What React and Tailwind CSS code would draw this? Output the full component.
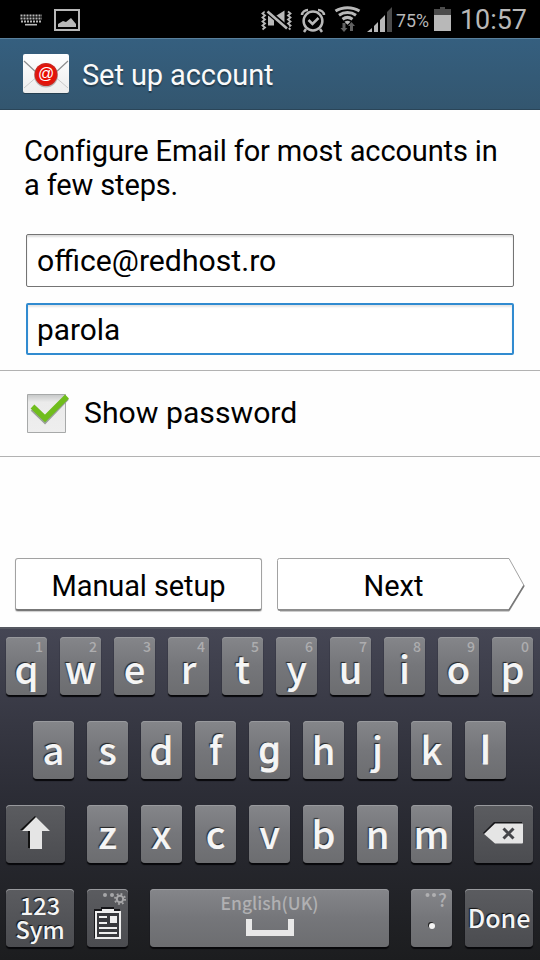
import React from 'react';

const LIGHT = 'bg-linear-to-b from-[#85868a] via-[#75767a] to-[#6c6d70]';
const DARK = 'bg-linear-to-b from-[#5b5c60] via-[#535458] to-[#4b4c50]';

const PLAIN = {
  g: "mt-[14px] text-[36px] font-['Noto_Sans',sans-serif] [-webkit-text-stroke:0.9px_#f5f5f5]",
  l: "mt-[13px] text-[38px] font-['Noto_Sans',sans-serif] [-webkit-text-stroke:0.9px_#f5f5f5]",
};

function Key({ label, hint, className = 'w-[41px]', tone = LIGHT, children }) {
  const face = PLAIN[label] || `text-[38px] [-webkit-text-stroke:0.2px_#f5f5f5] ${hint ? 'mt-[16px]' : 'mt-[13px]'}`;
  return (
    <div
      className={`relative flex h-[58px] shrink-0 justify-center rounded-[4px] text-[#f5f5f5] shadow-[0_2px_1px_#07070a,inset_0_1px_0_#98999d] ${label ? 'items-start' : 'items-center'} ${tone} ${className}`}
    >
      {hint && (
        <span className="absolute top-[4px] right-[4px] text-[14px] leading-[11px] font-medium text-[#adadaf]">{hint}</span>
      )}
      {label && (
        <span className={`leading-[30px] font-medium [text-shadow:-1px_-1px_1px_#222] ${face}`}>{label}</span>
      )}
      {children}
    </div>
  );
}

function StatusBar() {
  return (
    <header className="flex h-[38px] bg-black text-[#b8b8b8]">
      <svg width="540" height="38" viewBox="0 0 540 38" fill="none">
        <g stroke="#b8b8b8">
          <path d="M20.5 15.5H42M20.5 18.5H42M21 21.5H42" strokeWidth="2" strokeDasharray="2 1" />
          <path d="M25 24.7h12" strokeWidth="1.6" />
          <path d="M55 10h24v20H55z" strokeWidth="2" />
        </g>
        <path d="M58 27v-3l5-3 3 1 5-4 5 6v3z" fill="#b8b8b8" />
        <path d="M265 11.500l-2.500 2 2.500 2-2.500 2 2.500 2-2.500 2 2.500 2-2.500 2 2.500 2-2.500 2M288 11.500l2.500 2-2.500 2 2.500 2-2.500 2 2.500 2-2.500 2 2.500 2-2.500 2 2.500 2" stroke="#b8b8b8" strokeWidth="1.800" />
        <path d="M268 15.500h6v10h-6zM275 16.500l9.500-6v15z" fill="#b8b8b8" />
        <path d="M266 10l22 19" stroke="#000" strokeWidth="5.500" />
        <path d="M267.500 11.500l19.500 17" stroke="#b8b8b8" strokeWidth="2.600" />
        <g stroke="#b8b8b8" strokeWidth="2.5">
          <circle cx="313" cy="21" r="9.4" />
          <path d="M308.5 20l4 4 6-6M302 15c0-3 3-5 6-5M324 15c0-3-3-5-6-5M306 29l-2 3M320 29l2 3" />
        </g>
        <g stroke="#b8b8b8" strokeWidth="3">
          <path d="M335.5 11c7-4.500 17-4.500 24 0M339 15.200c5-3.500 12-3.500 17 0M342.5 19.200c3-2.2 7-2.2 10 0" />
        </g>
        <path d="M344.5 21.7q3-1.7 6 0l-3 3z" fill="#b8b8b8" />
        <path d="M342.500 23h3v5h2l-3.500 4-3.500-4h2zM350 31h3v-5h2l-3.500-4-3.500 4h2z" fill="#626262" />
        <path d="M367 32l5-4v4zM374 26l4-4v10h-4zM380 20l5-5v17h-5z" fill="#b8b8b8" />
        <path d="M387 12l5-5v25h-5z" fill="#4b4b4b" />
        <path d="M434 15V9h6V7h5v2h6v6z" fill="#4b4b4b" />
        <path d="M434 15h17v16h-17z" fill="#b8b8b8" />
        <text x="396" y="27" fontSize="18.5" fill="#b8b8b8" textLength="33" lengthAdjust="spacingAndGlyphs">75%</text>
        <text x="460" y="29" fontSize="28" fill="#b8b8b8" textLength="67" lengthAdjust="spacingAndGlyphs">10:57</text>
      </svg>
    </header>
  );
}

function MailIcon() {
  return (
    <svg width="48" height="42" viewBox="0 0 48 42" className="shrink-0">
      <defs>
        <linearGradient id="paper" x2="0" y2="1">
          <stop stopColor="#fff" />
          <stop offset="1" stopColor="#ededed" />
        </linearGradient>
        <radialGradient id="seal">
          <stop stopColor="#e90c00" />
          <stop offset=".78" stopColor="#e51208" />
          <stop offset="1" stopColor="#c82721" />
        </radialGradient>
      </defs>
      <rect x="1" y="2" width="46" height="39" rx="2" fill="#253f50" />
      <rect x="1" y="1" width="46" height="39" rx="2" fill="url(#paper)" />
      <path d="M2 35l15-13M46 35L31 22" stroke="#cacaca" />
      <path d="M2 8l14 13q8 5 16 0L46 8" fill="none" stroke="#8d8d8d" strokeWidth="1.2" />
      <circle cx="24" cy="22.500" r="12" fill="#b9b9b9" />
      <circle cx="24" cy="21.500" r="11.500" fill="url(#seal)" />
      <text x="24" y="26" textAnchor="middle" fontSize="16" fontFamily="Liberation Sans, sans-serif" fill="#fff">@</text>
    </svg>
  );
}

function Keyboard() {
  return (
    <section className="flex h-[333px] flex-col gap-[26px] border-t-2 border-[#555861] bg-linear-to-b from-[#454654] via-[#2c2d36] to-[#1c1d1f] pt-2 pl-1.5 font-['Noto_Sans_CJK_SC','Noto_Sans',sans-serif]">
      <div className="flex gap-[13px]">
        {'qwertyuiop'.split('').map((c, i) => (
          <Key key={c} label={c} hint={String((i + 1) % 10)} />
        ))}
      </div>
      <div className="flex gap-[13px] pl-[27px]">
        {'asdfghjkl'.split('').map((c) => <Key key={c} label={c} />)}
      </div>
      <div className="flex">
        <Key tone={DARK} className="mr-[22px] w-[59px] pb-[2px]">
          <svg width="32" height="36" viewBox="0 0 32 36">
            <path d="M15 1L0 15h8v18h12V15h8z" fill="#111" />
            <path d="M16 2L2 16h8v18h12V16h8z" fill="#e5e5e5" />
          </svg>
        </Key>
        <div className="mr-[22px] flex gap-[13px]">
          {'zxcvbnm'.split('').map((c) => <Key key={c} label={c} />)}
        </div>
        <Key tone={DARK} className="w-[59px]">
          <svg width="41" height="24" viewBox="0 0 41 24">
            <path d="M0 11L11 0h28v20H11z" fill="#17171a" />
            <path d="M1 12L12 1.500h27q1 0 1 1v18q0 1-1 1H12z" fill="#e5e5e5" />
            <path d="M20.500 6.500l10 10m0-10l-10 10" stroke="#444549" strokeWidth="3" />
          </svg>
        </Key>
      </div>
      <div className="flex">
        <Key tone={DARK} className="mr-[13px] w-[68px]">
          <span className="pb-[3px] text-center text-[23.5px] leading-[24px] font-medium [text-shadow:-1px_-1px_1px_#111]">123<br />Sym</span>
        </Key>
        <Key tone={DARK} className="mr-[22px] w-[41px]">
          <svg width="41" height="58" viewBox="0 0 41 58" fill="none">
            <circle cx="18" cy="6" r="2" fill="#a6a6a8" />
            <circle cx="25" cy="6" r="2" fill="#a6a6a8" />
            <circle cx="33" cy="10" r="3.200" stroke="#a6a6a8" strokeWidth="2" />
            <circle cx="33" cy="10" r="5" stroke="#a6a6a8" strokeWidth="2" strokeDasharray="1.800 2.127" />
            <path d="M7 20h7v-2h13v2h6v29H7z" fill="#161619" />
            <path d="M9 23h24v26H9z" fill="#38393d" stroke="#eee" strokeWidth="2" />
            <path d="M15 20h12v4H15z" fill="#eee" />
            <path d="M12 28h8M12 34h8M12 39h18M12 44h18" stroke="#eee" strokeWidth="2" />
            <path d="M23 27h7v7h-7z" fill="#eee" />
          </svg>
        </Key>
        <Key className="mr-[22px] w-[239px]">
          <span className="absolute top-[2px] text-[17.5px] leading-[24px] font-medium whitespace-nowrap text-[#b0b0b2]">English(UK)</span>
          <svg width="48" height="18" viewBox="0 0 48 18" className="absolute top-[30px] left-[96px]">
            <path d="M3 0v14h42V0" fill="none" stroke="#e8e8e8" strokeWidth="6" />
          </svg>
        </Key>
        <Key className="mr-[13px] w-[41px]">
          <svg width="41" height="58" viewBox="0 0 41 58">
            <circle cx="16.500" cy="6" r="2" fill="#b0b0b2" />
            <circle cx="23" cy="6" r="2" fill="#b0b0b2" />
            <circle cx="20" cy="36" r="3" fill="#222" />
            <circle cx="21" cy="37" r="3" fill="#f5f5f5" />
          </svg>
          <span className="absolute top-[1px] left-[27px] text-[18px] leading-[18px] font-medium text-[#b0b0b2]">?</span>
        </Key>
        <Key tone={DARK} className="w-[68px]">
          <span className="text-[25px] font-medium [text-shadow:-1px_-1px_1px_#111]">Done</span>
        </Key>
      </div>
    </section>
  );
}

export default function App() {
  return (
    <div className="flex h-[960px] w-[540px] flex-col overflow-hidden bg-[#fefefe] font-['Roboto',sans-serif] text-black">
      <StatusBar />
      <div className="flex h-[72px] items-center border-t border-b border-t-[#59809c] border-b-[#2a4558] bg-linear-to-b from-[#355f7f] to-[#33566f] pl-[22px]">
        <MailIcon />
        <h1 className="pt-1 pl-3 text-[29px] tracking-[-0.1px] whitespace-nowrap text-[#fafafa] [text-shadow:0_2px_1px_#233c4d]">Set up account</h1>
      </div>
      <main className="flex h-[517px] flex-col">
        <p className="h-[124px] pt-[24px] pl-6 text-[29px] leading-[34px] tracking-[-0.14px] whitespace-nowrap">Configure Email for most accounts in<br />a few steps.</p>
        <div className="mx-[26px] flex h-[53px] items-center rounded-[2px] border border-[#747474] bg-white pt-[1px] pl-2.5 text-[30.2px] shadow-[inset_0_2px_2px_#ddd]">office@redhost.ro</div>
        <div className="mx-[26px] mt-4 flex h-[52px] items-center rounded-[2px] border-2 border-[#318bd0] bg-white pt-[2px] pl-[9px] text-[29.8px] shadow-[inset_0_2px_2px_#e5e5e5]">parola</div>
        <div className="mt-[15px] flex h-[87px] items-center border-y border-[#b2b2b2] pl-[26px]">
          <svg width="45" height="42" viewBox="0 0 45 42" fill="none">
            <defs>
              <linearGradient id="box" x2="0" y2="1">
                <stop stopColor="#c5c7c7" />
                <stop offset=".2" stopColor="#ebebeb" />
                <stop offset="1" stopColor="#eee" />
              </linearGradient>
            </defs>
            <path d="M1.500 1.500h38v38h-38z" fill="url(#box)" stroke="#a7a9a9" />
            <path d="M6.500 16l12.500 12L41 5" stroke="#9aa099" strokeWidth="5" />
            <path d="M6.500 13.500l12.500 12L41 3.500" stroke="#70bd1c" strokeWidth="5.500" />
          </svg>
          <span className="pb-[1px] pl-[13px] text-[30.2px]">Show password</span>
        </div>
        <div className="mt-[101px] flex gap-[15px] pl-[15px] text-[29px]">
          <div className="flex h-[53px] w-[247px] items-center justify-center rounded-[3px] border border-b-2 border-[#a2a2a2] border-b-[#777] bg-white pt-[5px] tracking-[-0.1px] shadow-[0_1px_1px_#ccc]">Manual setup</div>
          <div className="relative flex h-[53px] w-[249px] items-center justify-center pt-[4px] pr-4">
            <svg className="absolute inset-0" width="249" height="55" viewBox="0 0 249 55" fill="none">
              <path d="M3 53.500h229l15-25" stroke="#ccc" />
              <path d="M2.500.5h229.500L247 27.500 232 52H2.500Q.5 52 .5 50V2.500Q.5.5 2.500.5z" fill="#fff" stroke="#a2a2a2" />
              <path d="M1 51.500Q1.500 52 3 52h229L247 27.500" stroke="#777" strokeWidth="1.500" />
            </svg>
            <span className="relative">Next</span>
          </div>
        </div>
      </main>
      <Keyboard />
    </div>
  );
}
